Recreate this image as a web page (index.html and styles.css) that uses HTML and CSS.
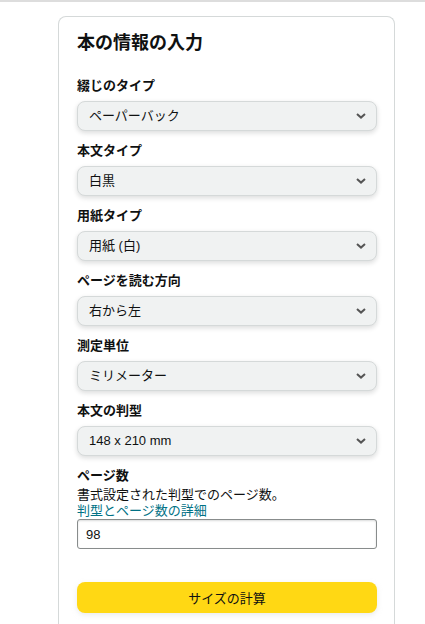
FILE: index.html
```html
<!DOCTYPE html>
<html lang="ja">
<head>
<meta charset="utf-8">
<link rel="stylesheet" href="styles.css">
</head>
<body>
<div class="topbar"></div>
<div class="card">
  <h2 class="title">本の情報の入力</h2>
  <div class="field">
    <div class="label">綴じのタイプ</div>
    <div class="select"><span>ペーパーバック</span><svg class="chev" width="10" height="6" viewBox="0 0 10 6"><path d="M1 1 L5 4.6 L9 1" fill="none" stroke="#555" stroke-width="2"/></svg></div>
  </div>
  <div class="field">
    <div class="label">本文タイプ</div>
    <div class="select"><span>白黒</span><svg class="chev" width="10" height="6" viewBox="0 0 10 6"><path d="M1 1 L5 4.6 L9 1" fill="none" stroke="#555" stroke-width="2"/></svg></div>
  </div>
  <div class="field">
    <div class="label">用紙タイプ</div>
    <div class="select"><span>用紙 (白)</span><svg class="chev" width="10" height="6" viewBox="0 0 10 6"><path d="M1 1 L5 4.6 L9 1" fill="none" stroke="#555" stroke-width="2"/></svg></div>
  </div>
  <div class="field">
    <div class="label">ページを読む方向</div>
    <div class="select"><span>右から左</span><svg class="chev" width="10" height="6" viewBox="0 0 10 6"><path d="M1 1 L5 4.6 L9 1" fill="none" stroke="#555" stroke-width="2"/></svg></div>
  </div>
  <div class="field">
    <div class="label">測定単位</div>
    <div class="select"><span>ミリメーター</span><svg class="chev" width="10" height="6" viewBox="0 0 10 6"><path d="M1 1 L5 4.6 L9 1" fill="none" stroke="#555" stroke-width="2"/></svg></div>
  </div>
  <div class="field">
    <div class="label">本文の判型</div>
    <div class="select"><span>148 x 210 mm</span><svg class="chev" width="10" height="6" viewBox="0 0 10 6"><path d="M1 1 L5 4.6 L9 1" fill="none" stroke="#555" stroke-width="2"/></svg></div>
  </div>
  <div class="field">
    <div class="label">ページ数</div>
    <div class="desc">書式設定された判型でのページ数。</div>
    <a class="link">判型とページ数の詳細</a>
    <div class="input">98</div>
  </div>
  <div class="button">サイズの計算</div>
</div>
</body>
</html>
```
FILE: styles.css
```css
html, body {
  margin: 0;
  padding: 0;
  background: #fff;
  font-family: "Liberation Sans", "Noto Sans CJK JP", sans-serif;
  color: #0f1111;
  overflow: hidden;
}
.topbar {
  height: 2px;
  background: #dddddd;
}
.card {
  margin: 14px 0 0 58px;
  width: 337px;
  height: 608px;
  box-sizing: border-box;
  border: 1px solid #d5d9d9;
  border-bottom: 0;
  border-radius: 8px 8px 0 0;
  padding: 14px 17px 0 18px;
  display: flex;
  flex-direction: column;
}
.title {
  margin: 0 0 21px 0;
  font-size: 18px;
  line-height: 24px;
  font-weight: 700;
}
.field {
  display: flex;
  flex-direction: column;
  margin-bottom: 10px;
}
.label {
  font-size: 13px;
  line-height: 20px;
  font-weight: 700;
  margin-bottom: 5px;
}
.select {
  height: 30px;
  box-sizing: border-box;
  width: 300px;
  display: flex;
  align-items: center;
  justify-content: space-between;
  padding: 0 10px 0 11px;
  background: #f0f2f2;
  border: 1px solid #d5d9d9;
  border-radius: 8px;
  box-shadow: 0 2px 5px rgba(15, 17, 17, 0.15);
  font-size: 13px;
  line-height: 18px;
}
.chev {
  display: block;
}
.desc {
  font-size: 13px;
  line-height: 17px;
  margin-top: -5px;
}
.link {
  font-size: 13px;
  line-height: 16px;
  color: #007185;
}
.input {
  width: 300px;
  height: 30px;
  box-sizing: border-box;
  border: 1px solid #888c8c;
  border-radius: 3px;
  padding: 0 8px;
  display: flex;
  align-items: center;
  font-size: 13px;
  box-shadow: 0 1px 2px rgba(15, 17, 17, 0.15) inset;
}
.button {
  margin-top: 23px;
  width: 300px;
  height: 31px;
  flex-shrink: 0;
  border-radius: 8px;
  background: #ffd814;
  display: flex;
  align-items: center;
  justify-content: center;
  font-size: 13px;
  box-shadow: 0 2px 5px rgba(213, 217, 217, 0.5);
}
```
